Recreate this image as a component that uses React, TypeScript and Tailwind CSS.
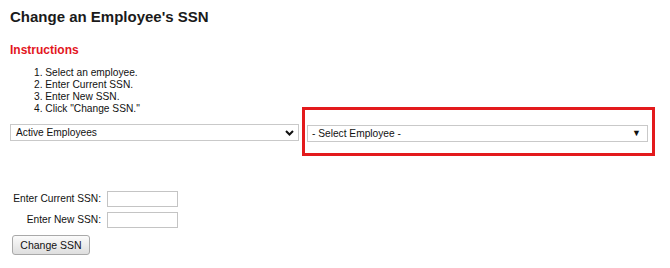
import React from "react";

function Chevron() {
  return (
    <svg width="9" height="6" viewBox="0 0 9 6" className="block">
      <path d="M1 1 L4.5 4.5 L8 1" fill="none" stroke="#111" strokeWidth="2" />
    </svg>
  );
}

export default function App() {
  return (
    <div className="w-[670px] h-[268px] bg-white text-black font-['Liberation_Sans',Arial,sans-serif] overflow-hidden">
      <h1 className="pl-[10px] pt-[7px] text-[15px] leading-[19px] font-bold text-[#1a1a1a]">
        Change an Employee's SSN
      </h1>
      <h2 className="pl-[10px] mt-[17px] text-[12px] leading-[15px] font-bold text-[#e3161e]">
        Instructions
      </h2>
      <ol className="mt-[9px] pl-[34px] text-[10.2px] leading-[12px] text-[#111]">
        <li>1. Select an employee.</li>
        <li>2. Enter Current SSN.</li>
        <li>3. Enter New SSN.</li>
        <li>4. Click "Change SSN."</li>
      </ol>
      <div className="mt-[9px] pl-[10px] flex items-start gap-[8px]">
        <div className="w-[289px] h-[17px] border border-[#c9c9c9] bg-white flex items-center justify-between pl-[5px] pr-[4px] text-[10.2px] text-[#111]">
          <span>Active Employees</span>
          <Chevron />
        </div>
        <div className="relative">
          <div className="w-[341px] h-[17px] border border-[#c9c9c9] bg-white flex items-center justify-between pl-[4px] pr-[6px] text-[10.2px] text-[#111] mt-[1px]">
            <span>- Select Employee -</span>
            <span className="text-[9px] leading-[9px]">▼</span>
          </div>
          <div className="absolute left-[-5px] right-[-7px] top-[-17px] bottom-[-14px] border-[3px] border-[#e31a1c]" />
        </div>
      </div>
      <div className="mt-[49px] pl-[13px] flex flex-col gap-[5px] text-[10.2px] text-[#111]">
        <div className="flex items-center">
          <span className="w-[94px] text-right pr-[6px] whitespace-nowrap">Enter Current SSN:</span>
          <div className="w-[71px] h-[16px] border border-[#c4c4c4] bg-white" />
        </div>
        <div className="flex items-center">
          <span className="w-[94px] text-right pr-[6px] whitespace-nowrap">Enter New SSN:</span>
          <div className="w-[71px] h-[16px] border border-[#c4c4c4] bg-white" />
        </div>
      </div>
      <div className="mt-[4px] pl-[12px]">
        <button className="w-[78px] h-[20px] rounded-[3px] border border-[#a9a9a9] bg-gradient-to-b from-[#fbfbfb] to-[#dedede] text-[10.5px] leading-[18px] text-[#111] font-['Liberation_Sans',Arial,sans-serif]">
          Change SSN
        </button>
      </div>
    </div>
  );
}
